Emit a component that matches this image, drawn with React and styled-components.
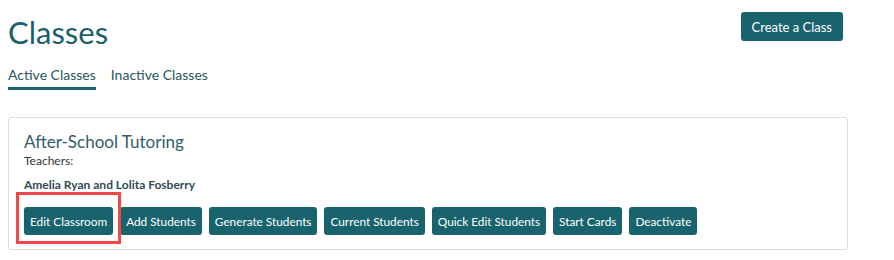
import React from "react";
import styled, { createGlobalStyle } from "styled-components";

const GlobalStyle = createGlobalStyle`
  body {
    margin: 0;
    background: #ffffff;
    font-family: Lato, "Liberation Sans", sans-serif;
  }
`;

const Page = styled.div`
  padding: 0 46px 0 8px;
  width: 894px;
  box-sizing: border-box;
`;

const Header = styled.div`
  display: flex;
  justify-content: space-between;
  align-items: flex-start;
  padding-top: 12px;
`;

const Title = styled.h1`
  margin: 0;
  font-size: 31px;
  font-weight: 400;
  line-height: 40px;
  color: #1b5f6c;
`;

const TealButton = styled.button`
  font-family: Lato, "Liberation Sans", sans-serif;
  font-size: ${(p) => (p.$large ? "13px" : "11.8px")};
  height: ${(p) => (p.$large ? "29px" : "28px")};
  padding: 0 ${(p) => (p.$large ? "11px" : "6px")};
  margin-right: ${(p) => (p.$large ? "5px" : "0")};
  background: #18636e;
  color: #ffffff;
  border: none;
  border-radius: 3px;
  cursor: pointer;
  white-space: nowrap;
`;

const Tabs = styled.div`
  display: flex;
  gap: 15px;
  margin-top: 14px;
`;

const Tab = styled.div`
  font-size: 14px;
  color: #2b5560;
  padding-bottom: 4px;
  border-bottom: 3px solid ${(p) => (p.$active ? "#18636e" : "transparent")};
`;

const Card = styled.div`
  margin-top: 27px;
  border: 1px solid #dddddd;
  border-radius: 3px;
  padding: 13px 15px 14px 15px;
`;

const CardTitle = styled.div`
  font-size: 17px;
  color: #2e5d69;
  line-height: 22px;
`;

const Label = styled.div`
  font-size: 12px;
  color: #333333;
  line-height: 16px;
`;

const Names = styled.div`
  font-size: 12px;
  font-weight: 700;
  color: #2f4a52;
  margin-top: 8px;
  line-height: 16px;
`;

const Actions = styled.div`
  display: flex;
  gap: 7px;
  margin-top: 14px;
`;

const Highlighted = styled.div`
  position: relative;
  display: flex;
`;

const RedMark = styled.div`
  position: absolute;
  left: -8px;
  top: -15px;
  width: 105px;
  height: 52px;
  box-sizing: border-box;
  border: 3px solid #f04848;
  pointer-events: none;
`;

const actions = [
  "Add Students",
  "Generate Students",
  "Current Students",
  "Quick Edit Students",
  "Start Cards",
  "Deactivate",
];

export default function App() {
  return (
    <Page>
      <GlobalStyle />
      <Header>
        <Title>Classes</Title>
        <TealButton $large>Create a Class</TealButton>
      </Header>
      <Tabs>
        <Tab $active>Active Classes</Tab>
        <Tab>Inactive Classes</Tab>
      </Tabs>
      <Card>
        <CardTitle>After-School Tutoring</CardTitle>
        <Label>Teachers:</Label>
        <Names>Amelia Ryan and Lolita Fosberry</Names>
        <Actions>
          <Highlighted>
            <TealButton>Edit Classroom</TealButton>
            <RedMark />
          </Highlighted>
          {actions.map((a) => (
            <TealButton key={a}>{a}</TealButton>
          ))}
        </Actions>
      </Card>
    </Page>
  );
}
